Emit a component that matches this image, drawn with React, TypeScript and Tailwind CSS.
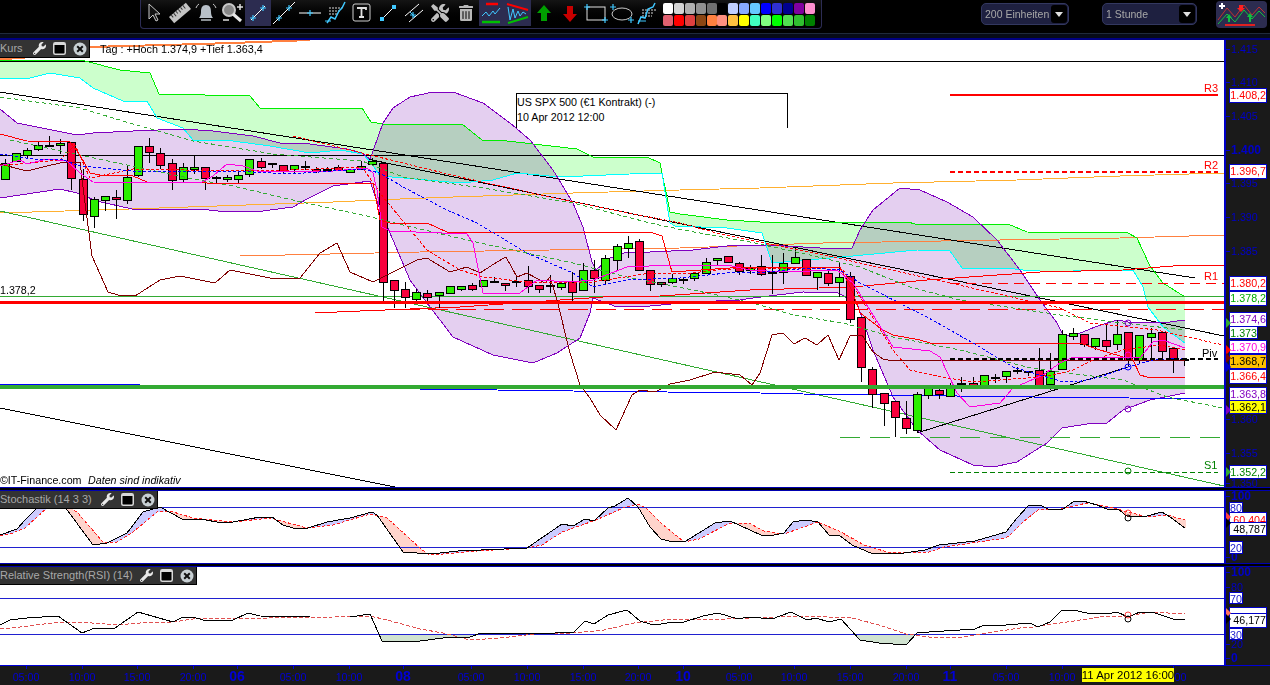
import React from 'react';
import { FaTools, FaTrashAlt, FaWrench } from 'react-icons/fa';

type Pt = number[];
const pts = (a: Pt[]) => a.map((p) => p.join(',')).join(' ');

// chart data, in page pixels
const cloudTop: Pt[] = [[0,60],[85,61],[120,70],[150,73],[159,94],[250,96],[260,108],[362,108],[371,122],[383,124],[462,124],[482,140],[507,141],[577,149],[593,157],[647,157],[660,163],[670,212],[680,214],[727,220],[760,222],[908,222],[915,224],[1008,224],[1027,232],[1128,233],[1137,238],[1142,249],[1150,266],[1163,283],[1185,297]];
const cloudLow: Pt[] = [[0,78],[10,79],[30,78],[50,73],[80,78],[93,88],[123,101],[147,101],[157,118],[183,128],[193,140],[233,141],[270,146],[310,153],[340,150],[363,154],[372,164],[380,176],[427,180],[460,183],[493,180],[517,173],[560,177],[653,173],[662,173],[670,223],[675,226],[727,228],[762,233],[772,263],[842,257],[917,250],[950,251],[962,268],[1007,268],[1023,270],[1057,272],[1090,270],[1133,270],[1143,287],[1148,307],[1163,327],[1185,343]];
const bbTop: Pt[] = [[0,109],[17,123],[47,129],[77,135],[93,133],[133,131],[183,129],[213,131],[253,136],[280,143],[310,144],[347,149],[362,153],[370,159],[373,151],[383,123],[393,108],[410,97],[433,92],[453,92],[483,103],[510,123],[530,140],[553,170],[573,203],[583,227],[592,262],[596,270],[610,258],[627,252],[650,252],[693,250],[727,246],[767,245],[838,249],[852,248],[860,230],[873,210],[900,188],[920,190],[947,202],[973,217],[997,240],[1020,270],[1040,300],[1057,323],[1063,335],[1073,336],[1095,327],[1117,320],[1128,322],[1153,323],[1170,322],[1185,320]];
const bbLow: Pt[] = [[0,198],[60,189],[77,193],[97,201],[132,209],[200,209],[227,212],[263,211],[293,207],[307,199],[333,186],[370,181],[380,210],[393,240],[410,280],[427,303],[453,337],[493,355],[533,363],[557,353],[580,338],[590,313],[593,298],[617,307],[650,306],[693,302],[740,300],[753,298],[777,295],[803,292],[838,293],[857,303],[873,350],[893,397],[917,430],[940,450],[973,465],[993,467],[1017,462],[1047,443],[1062,428],[1093,423],[1107,423],[1123,410],[1150,400],[1185,393]];
const maGreen1: Pt[] = [[0,97],[80,108],[133,124],[193,141],[273,154],[362,161],[403,177],[483,188],[573,203],[650,223],[683,230],[750,242],[810,255],[860,267],[910,287],[960,300],[1060,315],[1123,323],[1185,330]];
const maGreen2: Pt[] = [[10,140],[70,153],[193,179],[233,186],[297,201],[367,216],[403,225],[480,243],[573,263],[627,277],[683,288],[717,295],[760,305],[793,315],[843,323],[893,337],[960,350],[1027,367],[1060,372],[1123,380],[1167,397],[1223,408]];
const redDash1: Pt[] = [[293,136],[362,153],[460,177],[573,202],[680,223],[717,233],[810,252],[950,283],[1060,308],[1090,323],[1157,330],[1223,345]];
const redDash2: Pt[] = [[0,166],[60,160],[75,145],[90,178],[133,169],[233,171],[290,170],[362,167],[383,197],[427,250],[460,270],[483,277],[527,282],[593,282],[650,273],[683,274],[717,270],[750,268],[810,268],[843,270],[860,297],[893,350],[910,370],[947,378],[973,382],[1027,378],[1053,375],[1073,370],[1093,360],[1123,350],[1160,345],[1185,350]];
const redStep: Pt[] = [[0,134],[27,141],[70,142],[80,155],[90,173],[100,175],[133,176],[147,182],[173,182],[207,183],[373,183],[380,220],[390,223],[427,223],[447,232],[650,232],[662,236],[672,272],[730,268],[760,267],[840,267],[853,293],[860,313],[883,330],[893,335],[920,340],[930,343],[1080,343],[1097,349],[1133,360],[1140,375],[1147,377],[1185,377]];
const redRise: Pt[] = [[315,313],[360,311],[460,307],[603,297],[660,296],[750,290],[853,287],[927,280],[1040,272],[1123,270],[1173,266],[1224,265]];
const magenta: Pt[] = [[0,166],[20,160],[27,164],[47,159],[67,161],[80,173],[93,182],[200,183],[213,176],[227,164],[243,166],[257,171],[333,171],[367,168],[373,173],[377,190],[382,227],[390,231],[467,234],[473,243],[483,293],[520,293],[537,280],[570,282],[593,280],[627,267],[672,265],[727,265],[750,270],[783,272],[837,270],[853,283],[893,347],[930,351],[940,357],[957,393],[970,407],[1000,403],[1013,388],[1027,382],[1043,375],[1060,363],[1073,357],[1117,357],[1140,358],[1153,342],[1163,340],[1185,348]];
const blueDash: Pt[] = [[0,154],[33,159],[60,159],[80,166],[103,168],[133,171],[233,171],[290,174],[362,169],[380,173],[403,187],[447,210],[477,223],[527,253],[573,273],[593,287],[627,280],[680,278],[727,273],[767,272],[810,268],[840,270],[860,283],[927,317],[973,343],[1013,367],[1033,373],[1060,381],[1077,382],[1100,377],[1128,367],[1153,360],[1185,358]];
const darkRed: Pt[] = [[0,164],[27,171],[47,166],[60,163],[80,162],[85,203],[92,256],[108,292],[118,295],[135,296],[160,280],[180,276],[215,283],[230,270],[270,278],[300,278],[320,253],[337,243],[350,272],[373,282],[417,260],[427,258],[450,272],[467,267],[480,273],[497,262],[506,257],[517,277],[527,273],[545,283],[550,277],[557,300],[570,353],[580,385],[590,398],[600,415],[616,430],[632,395],[640,390],[655,392],[670,384],[690,380],[715,372],[740,375],[752,385],[760,373],[772,335],[783,333],[794,344],[805,338],[817,345],[828,335],[839,360],[850,336],[862,335],[873,352],[883,359],[893,361],[1185,360]];
const orangeLow: Pt[] = [[240,256],[420,252],[680,248],[823,243],[1060,239],[1120,238],[1224,235]];
const amber: Pt[] = [[0,213],[130,209],[333,202],[400,199],[453,197],[573,193],[680,190],[760,188],[893,183],[1017,180],[1120,176],[1224,173]];
const blueLevel: Pt[] = [[419,389],[497,390],[573,391],[760,393],[803,394],[1033,397],[1224,399]];

// top, bottom, high, low, kind
const candles: [number, number, number, number, string][] = [
  [163,179,159,179,'g'],[153,161,153,161,'g'],[150,155,148,159,'g'],[145,149,141,151,'g'],[146,146,136,146,'d'],[143,145,139,154,'g'],[142,178,142,190,'r'],[179,214,169,221,'r'],[199,216,197,228,'g'],[196,200,196,211,'g'],
  [197,199,190,219,'r'],[177,200,166,204,'g'],[146,175,146,177,'g'],[146,152,138,163,'r'],[153,165,148,169,'r'],[163,180,159,190,'r'],[167,179,163,183,'g'],[167,169,155,174,'g'],[167,178,167,190,'r'],[178,178,176,184,'d'],
  [177,179,175,182,'g'],[175,179,170,184,'g'],[159,174,159,177,'g'],[161,167,158,169,'r'],[164,164,164,168,'d'],[165,171,165,174,'r'],[165,169,165,173,'g'],[167,167,161,170,'d'],[169,171,167,173,'r'],[170,170,167,171,'d'],
  [167,170,165,171,'r'],[169,172,169,173,'g'],[166,169,161,170,'g'],[161,164,158,164,'g'],[163,282,163,302,'r'],[280,290,280,308,'r'],[289,297,282,308,'r'],[292,299,289,303,'g'],[293,297,290,302,'r'],[292,295,292,308,'g'],
  [286,293,286,293,'g'],[286,289,286,291,'g'],[285,289,283,291,'r'],[280,286,280,286,'g'],[282,282,277,283,'d'],[283,285,283,291,'r'],[282,282,277,287,'d'],[280,286,266,293,'r'],[285,289,285,293,'r'],[286,286,275,293,'d'],
  [283,287,283,290,'g'],[282,292,272,302,'r'],[270,290,263,290,'g'],[270,278,260,293,'r'],[258,280,255,284,'g'],[246,260,244,271,'g'],[243,248,236,258,'g'],[241,270,239,270,'r'],[270,284,270,291,'r'],[282,284,282,287,'r'],
  [278,282,274,284,'g'],[280,280,277,284,'d'],[273,278,273,281,'g'],[262,273,258,273,'g'],[258,260,258,265,'g'],[256,262,256,262,'r'],[263,271,262,275,'r'],[268,270,265,274,'g'],[266,274,255,276,'r'],[273,273,255,294,'d'],
  [263,272,253,284,'g'],[257,263,248,263,'g'],[259,275,259,275,'r'],[272,277,272,290,'g'],[273,283,270,286,'r'],[277,282,263,297,'g'],[276,319,272,323,'r'],[317,367,317,382,'r'],[369,394,367,408,'r'],[393,403,393,426,'r'],
  [401,417,401,437,'r'],[418,428,401,434,'r'],[394,430,392,432,'g'],[387,395,385,399,'g'],[390,394,388,399,'r'],[385,396,383,396,'g'],[384,384,377,392,'d'],[383,386,377,386,'r'],[375,385,375,385,'g'],[378,378,374,383,'d'],
  [371,376,371,383,'g'],[371,371,367,374,'d'],[372,372,372,376,'d'],[370,385,348,389,'r'],[371,384,353,390,'g'],[334,369,330,369,'g'],[333,336,328,340,'g'],[334,344,334,347,'r'],[338,346,338,350,'g'],[340,346,325,352,'r'],
  [334,344,320,350,'g'],[332,360,332,367,'r'],[335,360,335,363,'g'],[333,337,328,360,'g'],[332,351,332,360,'r'],[348,359,348,373,'r'],[360,360,360,366,'d'],
];

const stochK: Pt[] = [[0,535],[17,529],[25,520],[37,508],[47,502],[60,503],[65,507],[93,545],[107,543],[127,533],[143,512],[160,507],[182,519],[200,519],[223,523],[233,522],[260,517],[272,517],[283,525],[293,528],[305,529],[327,522],[350,518],[372,512],[377,515],[403,552],[431,554],[458,551],[527,548],[562,524],[573,526],[585,519],[594,521],[608,508],[615,506],[628,498],[638,507],[650,527],[661,539],[673,542],[686,541],[715,523],[730,521],[761,535],[774,535],[784,533],[793,522],[805,520],[818,522],[829,535],[839,535],[852,545],[873,554],[889,553],[904,553],[925,550],[939,545],[975,541],[1006,532],[1017,518],[1028,506],[1040,505],[1048,509],[1063,509],[1073,502],[1083,501],[1097,505],[1107,509],[1118,509],[1128,517],[1147,516],[1162,512],[1170,517],[1185,528]];
const stochD: Pt[] = [[0,536],[10,534],[25,528],[48,507],[67,506],[77,512],[103,542],[117,542],[133,532],[157,512],[170,511],[193,518],[233,522],[270,518],[307,528],[333,525],[370,514],[387,518],[420,548],[428,554],[443,554],[477,551],[527,548],[542,545],[562,532],[596,520],[623,508],[638,504],[646,508],[661,523],[684,542],[699,539],[730,523],[749,523],[764,531],[784,534],[818,522],[841,532],[864,545],[887,552],[906,553],[929,552],[944,547],[1006,538],[1010,535],[1023,522],[1038,510],[1060,509],[1087,503],[1110,507],[1128,512],[1147,517],[1167,515],[1185,520]];
const rsiK: Pt[] = [[0,625],[10,620],[27,618],[58,616],[82,633],[95,628],[115,628],[138,612],[173,622],[183,617],[193,617],[203,620],[233,620],[248,613],[260,616],[310,617],[350,617],[370,614],[382,641],[420,641],[443,638],[470,637],[481,633],[535,633],[542,634],[569,632],[573,633],[585,621],[594,624],[608,615],[627,610],[640,621],[650,624],[661,624],[673,622],[684,622],[703,616],[718,613],[738,619],[749,617],[772,619],[791,612],[807,620],[816,618],[829,622],[841,619],[860,640],[879,643],[906,645],[917,633],[929,632],[975,629],[984,625],[996,626],[1006,625],[1030,623],[1038,627],[1050,622],[1062,610],[1073,610],[1087,613],[1107,614],[1117,612],[1128,617],[1140,612],[1152,612],[1173,619],[1185,619]];
const rsiD: Pt[] = [[0,629],[20,627],[60,622],[80,622],[117,625],[140,623],[173,622],[200,618],[267,618],[333,617],[370,616],[387,620],[420,629],[443,633],[470,640],[500,638],[535,634],[573,633],[604,630],[634,623],[673,619],[726,619],[803,616],[852,618],[879,625],[906,634],[937,638],[963,637],[994,632],[1020,628],[1033,627],[1067,622],[1100,617],[1128,616],[1150,612],[1185,614]];

const yAt = (line: Pt[], x: number) => {
  for (let i = 1; i < line.length; i++) {
    if (x <= line[i][0]) {
      const [x0, y0] = line[i - 1];
      const [x1, y1] = line[i];
      return y0 + ((y1 - y0) * (x - x0)) / (x1 - x0 || 1);
    }
  }
  return line[line.length - 1][1];
};

const bandPath = (a: Pt[], b: Pt[] | null, flat: number, want: (d: number) => boolean) => {
  let d = '';
  for (let x = 0; x <= 1185; x++) {
    const y1 = yAt(a, x);
    const y2 = b ? yAt(b, x) : flat;
    if (want(y2 - y1)) d += `M${x} ${y1}V${y2}`;
  }
  return d;
};

const Line = ({ d, c, w = 1, dash }: { d: Pt[]; c: string; w?: number; dash?: string }) => (
  <polyline points={pts(d)} fill="none" stroke={c} strokeWidth={w} strokeDasharray={dash} />
);
const Level = ({ y, x1 = 0, x2 = 1224, c, w = 1, dash }: { y: number; x1?: number; x2?: number; c: string; w?: number; dash?: string }) => (
  <line x1={x1} x2={x2} y1={y} y2={y} stroke={c} strokeWidth={w} strokeDasharray={dash} />
);
const Ring = ({ y, c }: { y: number; c: string }) => (
  <circle cx={1128} cy={y} r={3} fill="none" stroke={c} shapeRendering="geometricPrecision" />
);
const Note = ({ x, y, c, children, size = 11 }: { x: number; y: number; c: string; children: React.ReactNode; size?: number }) => (
  <text x={x} y={y} fill={c} fontSize={size}>{children}</text>
);

const Candle = ({ i }: { i: number }) => {
  const [t, b, hi, lo, k] = candles[i];
  const x = Math.round(4.7 + 11.125 * i);
  return (
    <g>
      <line x1={x + 0.5} x2={x + 0.5} y1={hi} y2={lo} stroke="#000" />
      {k === 'd' ? (
        <rect x={x - 4} y={t - 1} width={9} height={2} fill="#000" />
      ) : (
        <rect x={x - 3.5} y={t + 0.5} width={8} height={b - t} fill={k === 'g' ? '#2bef00' : '#f8003c'} stroke="#000" />
      )}
    </g>
  );
};

const MainChart = () => (
  <svg width={1224} height={447} viewBox="0 40 1224 447" shapeRendering="crispEdges" className="block">
    <polygon points={pts([...cloudTop, ...[...cloudLow].reverse()])} fill="#ccffcc" />
    <polygon points={pts([...bbTop, ...[...bbLow].reverse()])} fill="#e4cff0" className="mix-blend-multiply" />
    <Line d={[[90,47],[200,44],[260,42],[310,40]]} c="#ff8040" w={2} />
    <Line d={[[0,59],[25,58]]} c="#ff8040" w={2} />
    <Level y={61.5} c="#000" />
    <Level y={155.5} c="#000" />
    <Line d={amber} c="#ffb030" />
    <Line d={orangeLow} c="#ff8040" />
    <Line d={[[0,92],[1195,278]]} c="#000" />
    <Line d={[[367,159],[1224,336]]} c="#000" />
    <Line d={[[0,408],[395,487]]} c="#000" />
    <Line d={[[0,211],[1224,486]]} c="#33aa33" />
    <Line d={[[917,433],[1128,367]]} c="#000" />
    <Line d={cloudTop} c="#00ee00" />
    <Line d={cloudLow} c="#00ffff" />
    <Line d={bbTop} c="#8000c0" />
    <Line d={bbLow} c="#8000c0" />
    <Level y={95} x1={950} x2={1218} c="#ff0000" w={2} />
    <Level y={172} x1={950} x2={1218} c="#ff0000" w={2} dash="5 3" />
    <Level y={283.5} x1={950} c="#ff0000" dash="10 6" />
    <Level y={296.5} c="#33aa33" />
    <Level y={309} x1={400} c="#ff0000" dash="20 8" />
    <Level y={437} x1={840} c="#33aa33" dash="20 10" />
    <Level y={472} x1={950} x2={1218} c="#008000" dash="5 3" />
    <Level y={384.5} x2={140} c="#0000ff" />
    <Line d={blueLevel} c="#0000ff" />
    <Line d={redRise} c="#ff0000" />
    {candles.map((_, i) => <Candle key={i} i={i} />)}
    <Line d={darkRed} c="#800000" />
    <Line d={maGreen1} c="#33aa33" dash="4 3" />
    <Line d={maGreen2} c="#33aa33" dash="4 3" />
    <Line d={redStep} c="#ff0000" />
    <Line d={redDash1} c="#ff0000" dash="3 2" />
    <Line d={redDash2} c="#ff0000" dash="3 2" />
    <Line d={magenta} c="#ff00e0" />
    <Line d={blueDash} c="#0000ff" dash="3 2" />
    <Level y={359} x1={950} x2={1218} c="#000" w={2} dash="5 3" />
    <rect x={0} y={385} width={1224} height={4} fill="#33aa33" />
    <rect x={0} y={301} width={1224} height={3} fill="#ff0000" />
    <Ring y={323} c="#8000c0" />
    <Ring y={355} c="#ff00e0" />
    <Ring y={367} c="#0000ff" />
    <Ring y={409} c="#8000c0" />
    <Ring y={471} c="#008000" />
    <Note x={0} y={294} c="#000" size={10.7}>1.378,2</Note>
    <Note x={1204} y={92} c="#ff0000">R3</Note>
    <Note x={1204} y={169} c="#ff0000">R2</Note>
    <Note x={1204} y={280} c="#ff0000">R1</Note>
    <Note x={1202} y={357} c="#000">Piv</Note>
    <Note x={1204} y={469} c="#008000">S1</Note>
    <Note x={0} y={484} c="#000" size={10.7}>©IT-Finance.com</Note>
    <text x={88} y={484} fill="#000" fontSize={10.7} fontStyle="italic">Daten sind indikativ</text>
  </svg>
);

const StochChart = () => (
  <svg width={1224} height={72} viewBox="0 491 1224 72" shapeRendering="crispEdges" className="block">
    <path d={bandPath(stochK, stochD, 0, (d) => d > 0)} stroke="#ccccff" fill="none" />
    <path d={bandPath(stochK, stochD, 0, (d) => d < 0)} stroke="#ffd4cc" fill="none" />
    <Level y={507.5} c="#2020d0" />
    <Level y={547.5} c="#2020d0" />
    <Line d={stochD} c="#ff2020" dash="3 2" />
    <Line d={stochK} c="#000" />
    <Ring y={513} c="#ff4040" />
    <Ring y={518} c="#000" />
  </svg>
);

const RsiChart = () => (
  <svg width={1224} height={98} viewBox="0 567 1224 98" shapeRendering="crispEdges" className="block">
    <path d={bandPath(rsiK, null, 634, (d) => d < 0)} stroke="#d0e2d0" fill="none" />
    <Level y={598.5} c="#2020d0" />
    <Level y={634.5} c="#2020d0" />
    <Line d={rsiD} c="#e05050" dash="4 2" />
    <Line d={rsiK} c="#000" />
    <Ring y={615} c="#ff4040" />
    <Ring y={619} c="#000" />
  </svg>
);

const WindowIcon = () => (
  <svg width={13} height={13} viewBox="0 0 13 13"><rect x={0.75} y={0.75} width={11.5} height={11.5} rx={1.5} fill="#000" stroke="#d8d8d8" strokeWidth={1.5} /><rect x={1} y={1} width={11} height={2} fill="#d8d8d8" /></svg>
);
const CloseIcon = () => (
  <svg width={14} height={14} viewBox="0 0 14 14"><circle cx={7} cy={7} r={6.5} fill="#c8d0d4" /><path d="M4.2 4.2l5.6 5.6M9.8 4.2l-5.6 5.6" stroke="#111" strokeWidth={2} /></svg>
);

const PanelHead = ({ title, w }: { title: string; w: string }) => (
  <div className={`absolute left-0 top-0 ${w} h-[18px] bg-[#333333] border-r border-b border-black flex items-center text-[#a8a8a8] text-[11px] leading-none`}>
    <span className="flex-1 whitespace-nowrap">{title}</span>
    <span className="flex items-center gap-[7px] pr-[2px]">
      <FaWrench size={13} color="#e8e8e8" />
      <WindowIcon />
      <CloseIcon />
    </span>
  </div>
);

// axis pieces, drawn in the axis' own svg with page y values
const AxisBlue = '#0000c8';
const Tag = ({ y, text, color, bg = '#fff', w = 38, h = 15, base = 11 }: { y: number; text: string; color: string; bg?: string; w?: number; h?: number; base?: number }) => (
  <g>
    <rect x={3.5} y={y + 0.5} width={w - 1} height={h - 1} fill={bg} stroke={AxisBlue} shapeRendering="crispEdges" />
    <text x={w + 2} y={y + base} textAnchor="end" fill={color} fontSize={10.7}>{text}</text>
  </g>
);
const Tick = ({ y, text, bold }: { y: number; text: string; bold?: boolean }) => (
  <g>
    <rect x={0} y={y} width={4} height={1} fill={AxisBlue} />
    <text x={5} y={y + 4} fill={AxisBlue} fontSize={bold ? 12 : 10.7} fontWeight={bold ? 700 : 400}>{text}</text>
  </g>
);
const Mark = ({ y, c }: { y: number; c: string }) => <polygon points={`0,${y - 5} 5,${y} 0,${y + 5}`} fill={c} />;

const mainTicks: [string, number, boolean?][] = [['1.415',49],['1.410',82],['1.405',116],['1.400',150,true],['1.395',183],['1.390',217],['1.385',251],['1.360',419],['1.355',453],['1.350',483]];

const MainAxis = () => (
  <svg width={44} height={447} viewBox="0 40 44 447" className="block">
    {mainTicks.map(([t, y, b]) => <Tick key={t} y={y} text={t} bold={b} />)}
    <Tag y={88} text="1.408,2" color="#ff0000" />
    <Tag y={164} text="1.396,7" color="#ff0000" />
    <Tag y={276} text="1.380,2" color="#ff0000" />
    <Tag y={291} text="1.378,2" color="#00aa00" />
    <Tag y={312} text="1.374,6" color="#8000c0" />
    <Tag y={340} text="1.370,9" color="#ff00e0" h={14} />
    <Tag y={326} text="1.373" color="#008000" w={29} h={13} />
    <Tag y={354} text="1.368,7" color="#000" bg="#ffc000" />
    <Tag y={369} text="1.366,4" color="#ff0000" />
    <Tag y={387} text="1.363,8" color="#8000c0" h={14} />
    <Tag y={400} text="1.362,1" color="#000" bg="#ffff00" h={14} />
    <Tag y={465} text="1.352,2" color="#008000" h={14} />
    <Mark y={323} c="#33aa33" />
    <Mark y={350} c="#ff0000" />
    <Mark y={358} c="#800000" />
    <Mark y={367} c="#0000c8" />
    <Mark y={410} c="#8000c0" />
    <Mark y={472} c="#33aa33" />
  </svg>
);

const StochAxis = () => (
  <svg width={44} height={72} viewBox="0 491 44 72" className="block">
    <Tick y={496} text="100" bold />
    <Tick y={557} text="0" bold />
    <Tag y={502} text="80" color="#2020d0" w={14} h={11} base={10} />
    <Tag y={512} text="60,404" color="#ff0000" h={12} base={12} />
    <Tag y={522} text="48,787" color="#000" h={14} />
    <Tag y={541} text="20" color="#2020d0" w={14} h={13} />
    <Mark y={517} c="#ff4040" />
    <Mark y={523} c="#000" />
  </svg>
);

const RsiAxis = () => (
  <svg width={44} height={98} viewBox="0 567 44 98" className="block">
    <Tick y={572} text="100" bold />
    <Tick y={587} text="80" />
    <Tick y={644} text="20" />
    <Tick y={658} text="0" bold />
    <Tag y={592} text="70" color="#2020d0" w={14} h={12} />
    <Tag y={607} text="" color="#000" h={7} />
    <Tag y={613} text="46,177" color="#000" h={15} />
    <Tag y={628} text="30" color="#2020d0" w={14} h={12} />
    <Mark y={613} c="#ff7060" />
    <Mark y={619} c="#000" />
  </svg>
);

const timeLabels: [string, number, boolean?][] = [['05:00',26],['10:00',82],['15:00',137],['20:00',193],['06',237,true],['05:00',293],['10:00',349],['08',403,true],['05:00',471],['10:00',527],['15:00',583],['20:00',638],['10',683,true],['05:00',739],['10:00',794],['15:00',850],['20:00',906],['11',950,true],['05:00',1006],['10:00',1062],['20:00',1173]];

const TimeAxis = () => (
  <svg width={1270} height={20} viewBox="0 665 1270 20" className="block">
    <rect x={0} y={665} width={1270} height={1} fill="#0000d8" />
    {timeLabels.map(([t, x, b]) => (
      <g key={t + x}>
        <rect x={x} y={666} width={1} height={3} fill="#0000d8" />
        <text x={x} y={681} textAnchor="middle" fill="#0000d8" fontSize={b ? 14 : 10.7} fontWeight={b ? 700 : 400}>{t}</text>
      </g>
    ))}
    <rect x={1082} y={668} width={92} height={14} fill="#ffff00" />
    <text x={1128} y={679} textAnchor="middle" fill="#000" fontSize={11.4}>11 Apr 2012 16:00</text>
  </svg>
);

// toolbar drawings
const Cy = '#40c8ff';
const Ic = ({ children }: { children: React.ReactNode }) => (
  <svg width={24} height={24} viewBox="0 0 24 24" fill="none">{children}</svg>
);
const Cross = ({ x, y }: { x: number; y: number }) => <path d={`M${x - 3} ${y}h6M${x} ${y - 3}v6`} stroke={Cy} strokeWidth={1.2} />;

const icons: React.ReactNode[] = [
  <Ic><path d="M7 3v15l4-4 3 6 2-1-3-6h5z" fill="#111" stroke="#c8c8c8" /></Ic>,
  <Ic><g transform="rotate(-40 12 12)"><rect x={1} y={8} width={22} height={8} fill="#c4c4c4" /><path d="M4 8v3M7 8v4M10 8v3M13 8v4M16 8v3M19 8v4" stroke="#333" /></g></Ic>,
  <Ic><path d="M12 4c-4 0-5 3-5 7 0 3-1 5-2 6h14c-1-1-2-3-2-6 0-4-1-7-5-7z" fill="#b8c0c8" /><rect x={7} y={18} width={10} height={2} fill="#8a8f94" /><path d="M2 7q1-3 3-4M22 7q-1-3-3-4" stroke="#c8c8c8" /></Ic>,
  <Ic><circle cx={9} cy={9} r={6} fill="#888" stroke="#c8c8c8" strokeWidth={2} /><path d="M13 13l8 7" stroke="#e8e8e8" strokeWidth={3} /><path d="M17 6h6M20 3v6M3 19h6" stroke="#e0e0e0" strokeWidth={1.5} /></Ic>,
  <Ic><path d="M5 19L19 5" stroke="#fff" /><Cross x={7} y={17} /><Cross x={17} y={7} /></Ic>,
  <Ic><path d="M1 23L23 1" stroke="#fff" /><Cross x={7} y={17} /><Cross x={17} y={7} /></Ic>,
  <Ic><path d="M1 12h22" stroke="#fff" /><Cross x={12} y={12} /></Ic>,
  <Ic><path d="M5 7h13M5 10h11M5 13h9" stroke="#d8d8d8" strokeDasharray="2 1" /><path d="M3 22l4-6 4 2 4-8 3-3 3-6" stroke={Cy} strokeWidth={1.5} /><path d="M1 20h6" stroke={Cy} /></Ic>,
  <Ic><rect x={3} y={3} width={17} height={17} rx={2} stroke="#d0d0d0" /><path d="M7 7h9v2M11.500 7v9M9 16h5" stroke="#e0e0e0" strokeWidth={1.8} /></Ic>,
  <Ic><path d="M6 18L18 6" stroke="#fff" /><rect x={4} y={16} width={4} height={4} fill={Cy} /><rect x={16} y={4} width={4} height={4} fill={Cy} /></Ic>,
  <Ic><path d="M3 15L17 3M7 21L21 9" stroke="#fff" /><path d="M8 11l5 5" stroke={Cy} /><Cross x={11} y={14} /></Ic>,
  <FaTools size={18} color="#c0c0c0" />,
  <FaTrashAlt size={16} color="#b8b8b8" />,
  <Ic><path d="M6 3h12" stroke="#ff0000" strokeWidth={2.5} /><path d="M2 21h18" stroke="#00c000" strokeWidth={2.5} /><path d="M2 15l4-4 3 4 4-5 2 3 5-6" stroke={Cy} /></Ic>,
  <Ic><path d="M1 3l21 6" stroke="#ff0000" strokeWidth={2} /><path d="M2 22l20-6" stroke="#00c000" strokeWidth={2} /><path d="M2 6l2 13 3-11 2 9 3-7 2 5 3-4 3 2" stroke={Cy} /></Ic>,
  <Ic><path d="M12 4l-7 8h4v8h6v-8h4z" fill="#00a000" /></Ic>,
  <Ic><path d="M12 21l7-8h-4V5H9v8H5z" fill="#c80000" /></Ic>,
  <Ic><rect x={3} y={6} width={18} height={13} stroke="#e0e0e0" /><Cross x={3} y={6} /><Cross x={21} y={19} /></Ic>,
  <Ic><ellipse cx={12} cy={13} rx={10} ry={6} stroke="#c8c8c8" /><Cross x={3} y={6} /><Cross x={21} y={19} /></Ic>,
  <Ic><path d="M6 9h14M6 12h12M6 15h10" stroke="#d8d8d8" strokeDasharray="2 1" /><path d="M2 23l3-7 4 1 3-9 5-2 2-4" stroke={Cy} strokeWidth={1.5} /><path d="M2 20h8" stroke={Cy} /></Ic>,
];

const swatches = [
  '#ffffff','#d4d4d4','#b0b0b0','#909090','#707070','#000000','#c0d0ff','#88aaff','#66c8ff','#0000ff','#3030d0','#000090','#8000a0','#ff90d0',
  '#e06070','#ff0000','#e04040','#8b4513','#ff8040','#ff9080','#ffc040','#ffff00','#40ffc0','#80ff80','#00ff00','#50e050','#30c030','#008000',
];

const Select = ({ text, w }: { text: string; w: string }) => (
  <div className={`${w} h-[22px] rounded-[5px] bg-[#1e2040] border border-[#333860] flex items-center pl-[3px] pr-[1px] text-[#a8a8a8] text-[10.5px] leading-none`}>
    <span className="flex-1 whitespace-nowrap">{text}</span>
    <span className="w-[16px] h-[18px] bg-black rounded-[3px] flex items-center justify-center">
      <svg width={8} height={5} viewBox="0 0 8 5"><polygon points="0,0 8,0 4,5" fill="#e0e0e0" /></svg>
    </span>
  </div>
);

const Toolbar = () => (
  <div className="h-[33px] bg-black flex pl-[140px]">
    <div className="w-[682px] h-[29px] flex items-start bg-gradient-to-b from-[#141414] to-black border-l border-b border-r border-[#2c2c54] rounded-bl-[4px] rounded-br-[4px]">
      {icons.map((ic, i) => (
        <div key={i} className={`w-[26px] h-[26px] flex items-center justify-center ${i === 4 || i === 13 || i === 14 ? 'bg-[#2c2c50]' : ''}`}>{ic}</div>
      ))}
      <div className="ml-[2px] mt-[3px] grid grid-cols-[repeat(14,10.9px)] gap-y-[1px]">
        {swatches.map((c, i) => (
          <span key={i} style={{ backgroundColor: c }} className="w-[10px] h-[11px] rounded-[2px]" />
        ))}
      </div>
    </div>
    <div className="ml-[159px] mt-[3px]"><Select text="200 Einheiten" w="w-[88px]" /></div>
    <div className="ml-[33px] mt-[3px]"><Select text="1 Stunde" w="w-[95px]" /></div>
    <div className="ml-[19px] mt-[1px] w-[51px] h-[27px] rounded-[4px] bg-[#2c2c50] flex items-center justify-center">
      <svg width={49} height={25} viewBox="0 0 49 25" fill="none">
        <path d="M1 18L10 6l8 9 9-12 8 10 7-8 6 6" stroke="#c03030" />
        <path d="M1 22l9-10 8 8 9-12 8 9 7-8 6 6" stroke="#10c040" />
        <path d="M2 4h6M5 1v6" stroke="#fff" strokeWidth={2} />
        <path d="M22 3h4v3h2l-4 4-4-4h2z" fill="#ff2020" />
        <path d="M12 12l3 4h-2v4h-2v-4H9zM33 11l3 4h-2v5h-2v-5h-2z" fill="#10c040" />
        <rect x={8} y={22} width={30} height={2} fill="#e02020" />
      </svg>
    </div>
  </div>
);

const Divider = () => <div className="h-[4px] bg-black border-y border-[#0000b0]" />;

const Panel = ({ h, chart, axis }: { h: string; chart: React.ReactNode; axis: React.ReactNode }) => (
  <div className={`flex ${h}`}>
    <div className="relative w-[1224px] bg-white overflow-hidden">{chart}</div>
    <div className="flex-1 border-l-2 border-[#0000c8] overflow-hidden">{axis}</div>
  </div>
);

export default function App() {
  return (
    <div className="w-[1270px] h-[685px] overflow-hidden bg-[#1a1a1a] font-['Liberation_Sans',Arial,sans-serif]">
      <Toolbar />
      <div className="h-[7px] bg-[#070b18] border-t border-[#1f2a3c] border-b-2 border-b-[#000080]" />

      <Panel
        h="h-[447px]"
        axis={<MainAxis />}
        chart={
          <>
            <MainChart />
            <PanelHead title="Kurs" w="w-[90px]" />
            <div className="absolute left-[100px] top-[2px] text-[10.8px] leading-[14px] text-black whitespace-nowrap">Tag : +Hoch 1.374,9 +Tief 1.363,4</div>
            <div className="absolute left-[516px] top-[53px] w-[272px] h-[35px] bg-white border-l border-t border-r border-black pt-px text-[10.7px] leading-[15px] text-black">
              <div>US SPX 500 (€1 Kontrakt) (-)</div>
              <div>10 Apr 2012 12:00</div>
            </div>
          </>
        }
      />

      <Divider />
      <Panel
        h="h-[72px]"
        axis={<StochAxis />}
        chart={
          <>
            <StochChart />
            <PanelHead title="Stochastik (14 3 3)" w="w-[158px]" />
          </>
        }
      />

      <Divider />
      <Panel
        h="h-[98px]"
        axis={<RsiAxis />}
        chart={
          <>
            <RsiChart />
            <PanelHead title="Relative Strength(RSI) (14)" w="w-[197px]" />
          </>
        }
      />

      <TimeAxis />
    </div>
  );
}
